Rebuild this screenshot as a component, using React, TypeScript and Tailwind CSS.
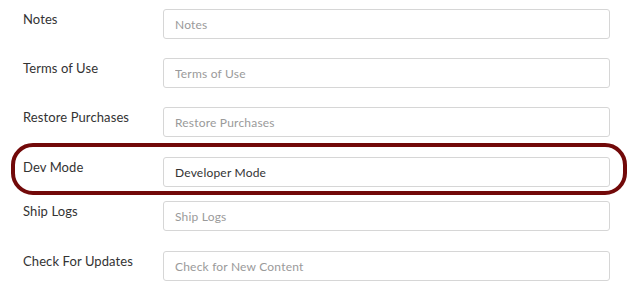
import { useState } from "react";

type Row = { id: string; label: string; placeholder: string; value?: string; gap: string };

const ROWS: Row[] = [
  { id: "notes", label: "Notes", placeholder: "Notes", gap: "mt-[9px]" },
  { id: "terms", label: "Terms of Use", placeholder: "Terms of Use", gap: "mt-[19px]" },
  { id: "restore", label: "Restore Purchases", placeholder: "Restore Purchases", gap: "mt-[19px]" },
  { id: "dev", label: "Dev Mode", placeholder: "Dev Mode", value: "Developer Mode", gap: "mt-[20px]" },
  { id: "ship", label: "Ship Logs", placeholder: "Ship Logs", gap: "mt-[14px]" },
  { id: "updates", label: "Check For Updates", placeholder: "Check for New Content", gap: "mt-[20px]" },
];

export default function App() {
  const [values, setValues] = useState<Record<string, string>>(
    Object.fromEntries(ROWS.map(r => [r.id, r.value ?? ""]))
  );

  return (
    <div
      className="w-[632px] h-[295px] bg-white overflow-hidden"
      style={{ fontFamily: "Lato, 'Open Sans', sans-serif" }}
    >
      {ROWS.map(r => (
        <div key={r.id} className={`relative flex items-start ${r.gap}`}>
          {/* highlight ring around the dev mode row */}
          {r.id === "dev" && (
            <div className="pointer-events-none absolute left-[11px] right-[5px] top-[-14px] bottom-[-8px] rounded-[22px] border-4 border-[#720909]" />
          )}
          <label className="w-[163px] shrink-0 pl-[23px] pt-[2px] text-[13px] leading-4 text-[#333] tracking-[0.1px]">
            {r.label}
          </label>
          <input
            value={values[r.id]}
            onChange={(e) => setValues({ ...values, [r.id]: e.target.value })}
            placeholder={r.placeholder}
            className="w-[447px] h-[30px] rounded-[3px] border border-[#d6d6d6] bg-white px-[11px] text-[12px] tracking-[0.2px] text-[#333] placeholder:text-[#9a9a9a] outline-none"
          />
        </div>
      ))}
    </div>
  );
}
